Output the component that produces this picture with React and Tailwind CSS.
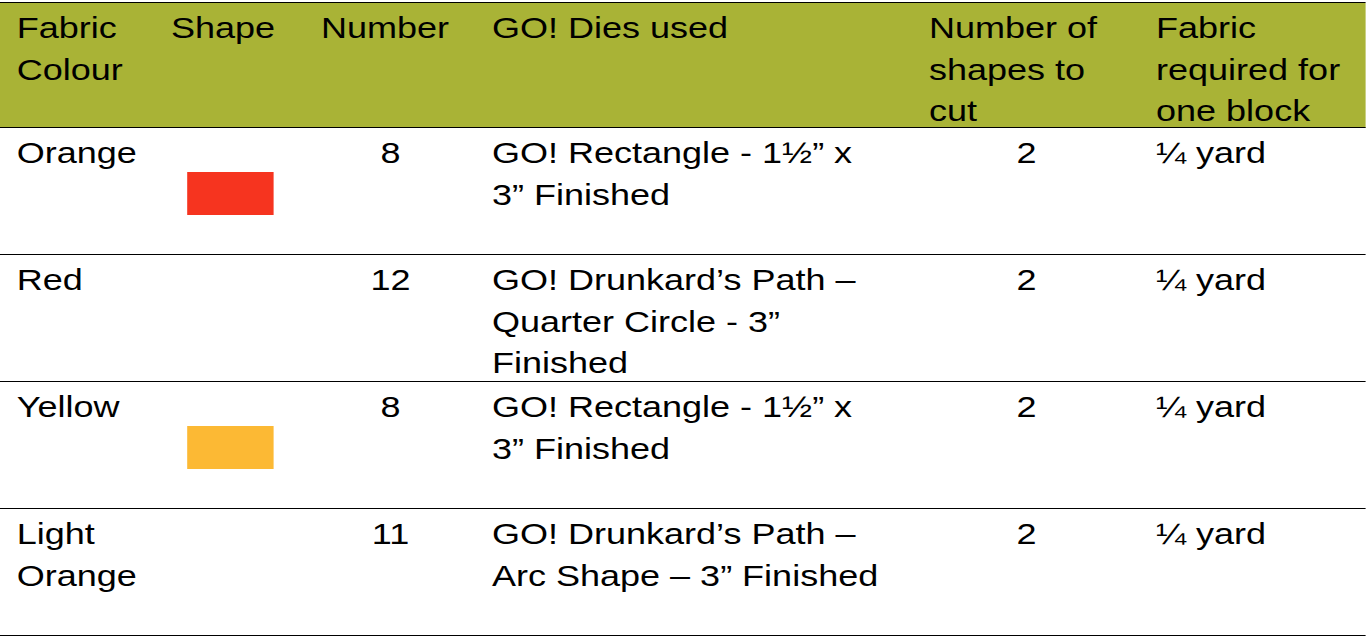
import React from 'react';

// the source table is rendered horizontally stretched, so lay it out narrow and widen it by 1.2
const cols = 'grid grid-cols-[129.2px_125px_142.5px_364.2px_189.2px_188.3px]';

const rows = [
  { colour: ['Orange'], swatch: 'bg-[#f6341f]', number: '8', dies: ['GO! Rectangle - 1½” x', '3” Finished'] },
  { colour: ['Red'], swatch: null, number: '12', dies: ['GO! Drunkard’s Path –', 'Quarter Circle - 3”', 'Finished'] },
  { colour: ['Yellow'], swatch: 'bg-[#fcb934]', number: '8', dies: ['GO! Rectangle - 1½” x', '3” Finished'] },
  { colour: ['Light', 'Orange'], swatch: null, number: '11', dies: ['GO! Drunkard’s Path –', 'Arc Shape – 3” Finished'] },
];

function Lines({ items }) {
  return items.map((t, i) => (
    <div key={i} className="whitespace-nowrap">{t}</div>
  ));
}

export default function App() {
  return (
    <div className="bg-white w-[1366px] h-[642px] overflow-hidden">
      <div className="w-[1138.4px] origin-left scale-x-[1.2] pt-[2px] text-black text-[30px] leading-[41.5px] font-['Liberation_Sans',Arial,sans-serif]">
        <div className="border-t border-black">
          <div className={`${cols} h-[125px] bg-[#a9b336] border-b border-black`}>
            <div className="px-[14px] pt-[4px]"><Lines items={['Fabric', 'Colour']} /></div>
            <div className="px-[13.3px] pt-[4px]">Shape</div>
            <div className="px-[13.3px] pt-[4px]">Number</div>
            <div className="px-[13.3px] pt-[4px]">GO! Dies used</div>
            <div className="px-[13.3px] pt-[4px]"><Lines items={['Number of', 'shapes to', 'cut']} /></div>
            <div className="px-[13.3px] pt-[4px]"><Lines items={['Fabric', 'required for', 'one block']} /></div>
          </div>
          {rows.map((r, i) => (
            <div key={i} className={`${cols} h-[127px] border-b border-black`}>
              <div className="px-[14px] pt-[4px]"><Lines items={r.colour} /></div>
              <div className="px-[13.3px] pt-[4px] flex flex-col items-center">
                {r.swatch && <div className={`mt-[40px] w-[71.7px] h-[43px] ${r.swatch}`} />}
              </div>
              <div className="px-[13.3px] pt-[4px] text-center">{r.number}</div>
              <div className="px-[13.3px] pt-[4px]"><Lines items={r.dies} /></div>
              <div className="px-[13.3px] pt-[4px] text-center">2</div>
              <div className="px-[13.3px] pt-[4px] whitespace-nowrap">¼ yard</div>
            </div>
          ))}
        </div>
      </div>
    </div>
  );
}
